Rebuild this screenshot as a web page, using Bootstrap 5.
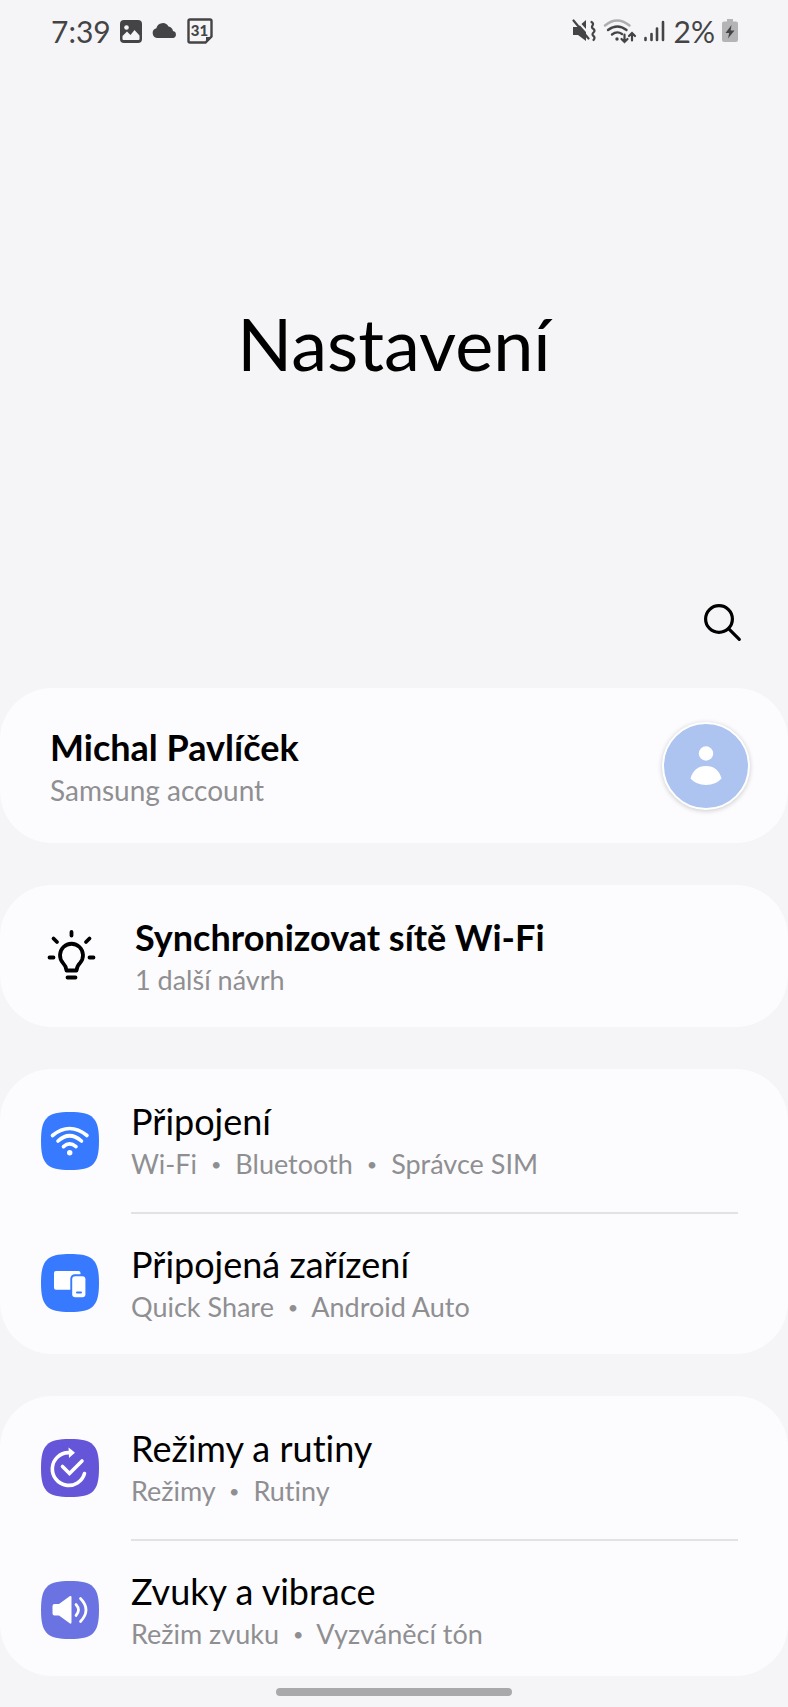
<!DOCTYPE html>
<html lang="cs">
<head>
<meta charset="utf-8">
<meta name="viewport" content="width=device-width, initial-scale=1">
<title>Nastavení</title>
<link href="https://cdn.jsdelivr.net/npm/bootstrap@5.3.0/dist/css/bootstrap.min.css" rel="stylesheet">
<style>
  body { background: #f5f5f7; color: #000; font-family: Lato, "Liberation Sans", sans-serif; font-variant-ligatures: none; }
  .status-bar { height: 62px; padding: 0 50px 0 51px; color: #444446; font-size: 30px; line-height: 40px; }
  .status-bar svg, .tile svg, .bulb, .search-btn svg { display: block; flex: none; }
  .status-left { gap: 9px; }
  .status-right { gap: 7px; }
  .page-title { padding-top: 239px; font-size: 72px; line-height: 84px; font-weight: 400; }
  .toolbar { padding: 209px 38px 38px; }
  .search-btn { padding: 8px; color: #000; }
  .groups { gap: 42px; }
  .panel { background: #fcfcfe; border-radius: 52px; overflow: hidden; }
  .entry { color: #000; text-decoration: none; }
  .entry-title { font-size: 36px; line-height: 44px; }
  .entry-sub { font-size: 28px; line-height: 42px; color: #8f8f92; }
  .tile .entry-sub, .tip .entry-sub { font-size: 27px; }
  .strong-title { font-weight: 700; }
  .account { padding: 33px 38px 32px 50px; }
  .account-text { padding-top: 4px; }
  .avatar { width: 88px; height: 88px; border: 2px solid #fff; background: #adc4f1; box-shadow: 0 1px 5px rgba(0, 0, 0, .2); flex: none; }
  .tip { padding: 30px 50px 26px 46px; gap: 37px; }
  .tile { padding-left: 41px; gap: 32px; }
  .tile-body { padding: 30px 0 27px; margin-right: 50px; }
  .tile + .tile .tile-body { padding: 28px 0 26px; border-top: 2px solid #e2e2e5; }
  .panel-cut .tile:last-child { margin-bottom: -5px; }
  .dot { margin: 0 7px; font-size: 18px; line-height: 1; vertical-align: 3px; }
  .home-wrap { padding: 12px 0 11px; }
  .home-pill { width: 30%; height: 8px; background: #a9a9ab; }
</style>
</head>
<body>
<header>
  <div class="status-bar d-flex align-items-center justify-content-between">
    <div class="status-left d-flex align-items-center">
      <span>7:39</span>
      <svg width="22" height="23" viewBox="0 0 22 23"><rect width="22" height="23" rx="4" fill="#444446"/><circle cx="6.5" cy="7.5" r="2.300" fill="#f5f5f7"/><path d="M2.500 19v-3l4.500-4.500 3.500 3.500 4-5 5 5.500V19q0 1-1 1h-15q-1 0-1-1Z" fill="#f5f5f7"/></svg>
      <svg width="27" height="24" viewBox="0 0 27 24"><path d="M6 19a5 5 0 0 1-.6-9.800A6.500 6.500 0 0 1 17.500 7.600 5.600 5.600 0 0 1 22 12a3.600 3.600 0 0 1 .3 7Z" fill="#444446"/></svg>
      <svg width="26" height="26" viewBox="0 0 26 26"><path d="M3 1.500h20q1.500 0 1.500 1.500v15.500l-6 6H3q-1.500 0-1.500-1.500V3q0-1.500 1.500-1.500Z" fill="none" stroke="#444446" stroke-width="2.400"/><path d="M19 24.500v-5.500h5.500Z" fill="#444446"/><text x="12.500" y="18" text-anchor="middle" font-size="15" font-weight="900" fill="#444446">31</text></svg>
    </div>
    <div class="status-right d-flex align-items-center">
      <svg width="24" height="24" viewBox="0 0 24 24" fill="none" stroke="#444446" stroke-width="2.200" stroke-linecap="round"><path d="M1 8h5l8-7v21l-8-6H1Z" fill="#444446" stroke="none"/><path d="M3.500 0 19 17" stroke="#f5f5f7" stroke-width="2"/><path d="M1.500 1.500 16.500 19.500"/><path d="M19.500 3q2.500 1.500 1 3.500t1 3.500q2 1.500 0 3.500t0 3.500 0 4"/></svg>
      <svg width="34" height="26" viewBox="0 0 34 26" fill="none" stroke="#444446" stroke-width="2.400" stroke-linecap="round"><path d="M2 7.500Q14-2.500 26.500 7.500" stroke="#aeaeb0"/><path d="M5 12q9.500-7 18.500 0M9 16.500q5-4 10-.5"/><circle cx="14" cy="21" r="1.700" fill="#444446" stroke="none"/><path d="M21.500 16.500V24m-3-3 3 3 3-3M29 22.500v-7m-3 2.500 3-3 3 3" stroke-width="2.200"/></svg>
      <svg width="23" height="24" viewBox="0 0 23 24" stroke="#444446" stroke-width="2.600" stroke-linecap="round"><path d="M1.500 21v-2M7.500 21v-6M13 21V9.500M19 21V3"/></svg>
      <span>2%</span>
      <svg width="16" height="24" viewBox="0 0 16 24"><path d="M5 0h6v2.500h3q2 0 2 2V21q0 2-2 2H2q-2 0-2-2V4.500q0-2 2-2h3Z" fill="#b4b4b6"/><path d="M9.500 6 3.500 14h3.700L6 19.500l6.500-8H8.700Z" fill="#444446"/></svg>
    </div>
  </div>
  <h1 class="page-title text-center mb-0">Nastavení</h1>
  <div class="toolbar d-flex justify-content-end">
    <button type="button" class="search-btn btn border-0" aria-label="Hledat">
      <svg width="40" height="40" viewBox="0 0 40 40" fill="none" stroke="#000" stroke-width="3.200" stroke-linecap="round"><circle cx="17" cy="17" r="13.400"/><path d="m26.800 26.800 10.500 10.500"/></svg>
    </button>
  </div>
</header>

<main class="groups d-flex flex-column">
  <section class="panel">
    <a href="#" class="entry account d-flex align-items-center justify-content-between">
      <span class="account-text">
        <span class="entry-title strong-title d-block">Michal Pavlíček</span>
        <span class="entry-sub d-block">Samsung account</span>
      </span>
      <span class="avatar rounded-circle">
        <svg class="d-block" width="84" height="84" viewBox="0 0 84 84" fill="#fff"><circle cx="42" cy="29.500" r="7.200"/><path d="M26.500 54.500Q30 42 42 42t15.500 12.500Q52 61 42 61t-15.500-6.500Z"/></svg>
      </span>
    </a>
  </section>

  <section class="panel">
    <a href="#" class="entry tip d-flex align-items-center">
      <svg class="bulb mb-2" width="52" height="52" viewBox="0 0 52 52" fill="none" stroke="#000" stroke-width="3.800" stroke-linecap="round" stroke-linejoin="round"><path d="M25.500 4v3.500M3.500 29.500h4M43.500 29.500h4M7.500 10.500l3.500 3.500M43.500 10.500 40 14M21.500 49.500h8"/><path d="M20.500 42.500h10q.5-4.500 3.500-7.500a11.500 11.500 0 1 0-17 0q3 3 3.500 7.500Z"/></svg>
      <span>
        <span class="entry-title strong-title d-block">Synchronizovat sítě Wi-Fi</span>
        <span class="entry-sub d-block">1 další návrh</span>
      </span>
    </a>
  </section>

  <section class="panel">
    <a href="#" class="entry tile d-flex align-items-center">
      <svg width="58" height="58" viewBox="0 0 58 58"><path d="M29 0C52 0 58 6 58 29S52 58 29 58 0 52 0 29 6 0 29 0Z" fill="#387aff"/><g fill="none" stroke="#fff" stroke-width="3.600" stroke-linecap="round"><path d="M11.500 23.500Q28.500 9.500 46 23.500M17 29q11.500-10.500 23.500 0M22.500 34.700q6-5.500 12.500 0"/></g><circle cx="28.700" cy="40.700" r="2.700" fill="#fff"/></svg>
      <span class="tile-body flex-grow-1">
        <span class="entry-title d-block">Připojení</span>
        <span class="entry-sub d-block">Wi-Fi <span class="dot">•</span> Bluetooth <span class="dot">•</span> Správce SIM</span>
      </span>
    </a>
    <a href="#" class="entry tile d-flex align-items-center">
      <svg width="58" height="58" viewBox="0 0 58 58"><path d="M29 0C52 0 58 6 58 29S52 58 29 58 0 52 0 29 6 0 29 0Z" fill="#387aff"/><rect x="13" y="17" width="26.500" height="18.700" rx="2" fill="#fff"/><rect x="29.300" y="20.300" width="17" height="25" rx="4.500" fill="#387aff"/><rect x="31.200" y="22.300" width="13.200" height="21" rx="3" fill="#fff"/><path d="M36 38.500h4" stroke="#387aff" stroke-width="2" stroke-linecap="round"/></svg>
      <span class="tile-body flex-grow-1">
        <span class="entry-title d-block">Připojená zařízení</span>
        <span class="entry-sub d-block">Quick Share <span class="dot">•</span> Android Auto</span>
      </span>
    </a>
  </section>

  <section class="panel panel-cut">
    <a href="#" class="entry tile d-flex align-items-center">
      <svg width="58" height="58" viewBox="0 0 58 58"><path d="M29 0C52 0 58 6 58 29S52 58 29 58 0 52 0 29 6 0 29 0Z" fill="#6555d8"/><g fill="none" stroke="#fff" stroke-width="3.600" stroke-linecap="round" stroke-linejoin="round"><path d="M27.500 13.600A16.400 16.400 0 1 0 43.500 34.500"/><path d="m21.500 27.500 7 7L41 22" stroke-linejoin="miter"/></g><path d="M27.500 8.500q3.500 2.500 6.500 5.200-3 2.500-6 5.300Z" fill="#fff"/></svg>
      <span class="tile-body flex-grow-1">
        <span class="entry-title d-block">Režimy a rutiny</span>
        <span class="entry-sub d-block">Režimy <span class="dot">•</span> Rutiny</span>
      </span>
    </a>
    <a href="#" class="entry tile d-flex align-items-center">
      <svg width="58" height="58" viewBox="0 0 58 58"><path d="M29 0C52 0 58 6 58 29S52 58 29 58 0 52 0 29 6 0 29 0Z" fill="#6b73e3"/><path d="M13.500 23H18l11-8q1.500-.5 1.500 1v25.500q0 1.500-1.500 1L18 34.500h-4.500q-2 0-2-2V25q0-2 2-2Z" fill="#fff"/><path d="M35 23.500q5 5.500 0 11M39.500 17.500q11 11.500 0 23" fill="none" stroke="#fff" stroke-width="2.700" stroke-linecap="round"/></svg>
      <span class="tile-body flex-grow-1">
        <span class="entry-title d-block">Zvuky a vibrace</span>
        <span class="entry-sub d-block">Režim zvuku <span class="dot">•</span> Vyzváněcí tón</span>
      </span>
    </a>
  </section>
</main>

<footer class="home-wrap d-flex justify-content-center">
  <div class="home-pill rounded-pill"></div>
</footer>
<script src="https://cdn.jsdelivr.net/npm/bootstrap@5.3.0/dist/js/bootstrap.bundle.min.js"></script>
</body>
</html>
